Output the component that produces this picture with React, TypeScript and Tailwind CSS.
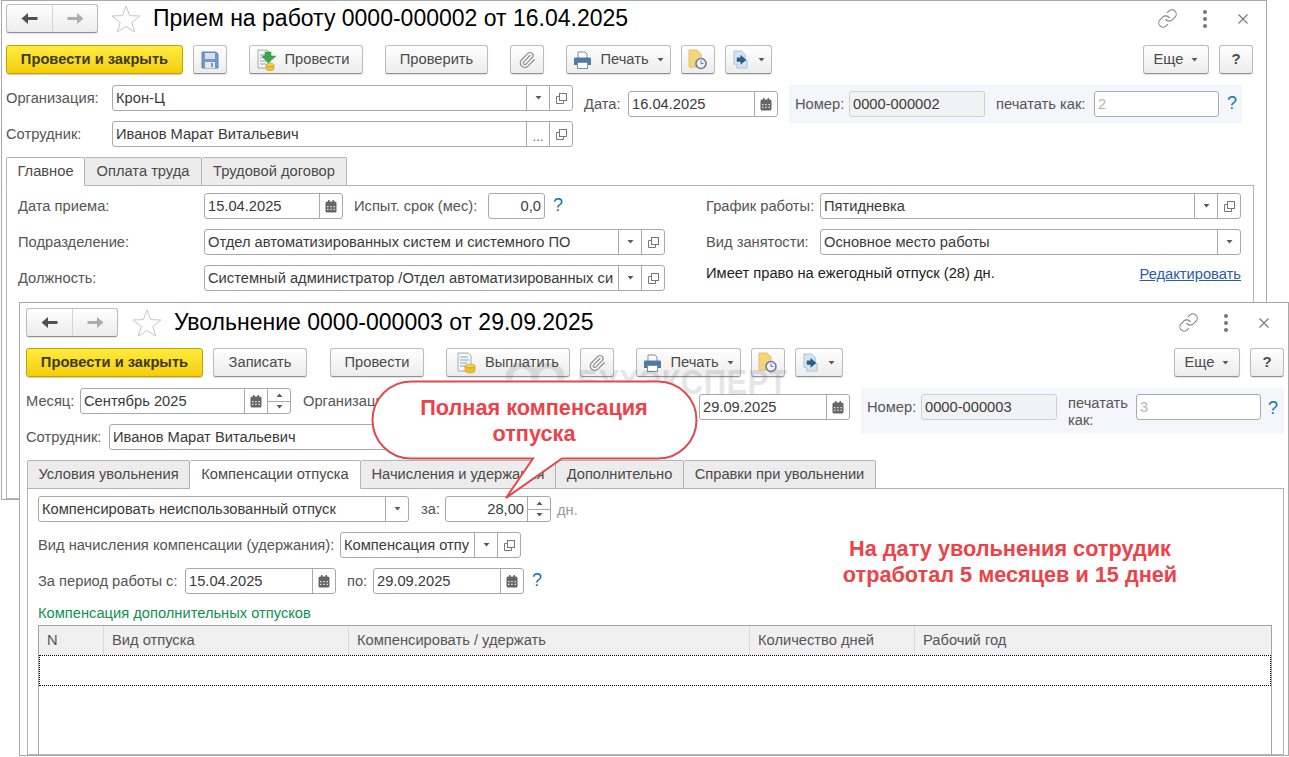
import type { ReactNode } from 'react';
import { Link, Paperclip } from 'lucide-react';

type Addon = 'drop' | 'open' | 'cal' | 'dots' | 'spin';

function Tri({ up = false }: { up?: boolean }) {
  return (
    <svg width="7" height="4" viewBox="0 0 7 4" className="shrink-0">
      <polygon points={up ? '0.5,4 6.5,4 3.5,0.5' : '0.5,0 6.5,0 3.5,3.5'} fill="#5a5a5a" />
    </svg>
  );
}

function OpenIcon() {
  return (
    <svg width="13" height="13" viewBox="0 0 13 13" fill="none" stroke="#777" strokeWidth="1">
      <rect x="4.5" y="1.5" width="7" height="7" />
      <path d="M4.5 4.5H1.5V11.5H8.5V8.5" />
    </svg>
  );
}

function CalIcon() {
  return (
    <svg width="12" height="13" viewBox="0 0 12 13">
      <rect x="0.5" y="1.5" width="11" height="11" rx="1.5" fill="#666" />
      <rect x="3" y="0" width="1.5" height="3" fill="#666" />
      <rect x="7.5" y="0" width="1.5" height="3" fill="#666" />
      <path d="M2 6h1.5v1.3H2zM5.2 6h1.5v1.3H5.2zM8.5 6H10v1.3H8.5zM2 8.8h1.5v1.3H2zM5.2 8.8h1.5v1.3H5.2zM8.5 8.8H10v1.3H8.5z" fill="#e4e4e4" />
    </svg>
  );
}

function Input({ w, text, addons = [], right, muted, faint }: { w: string; text?: string; addons?: Addon[]; right?: boolean; muted?: boolean; faint?: boolean }) {
  return (
    <div className={`${w} h-[26px] shrink-0 flex rounded-[3px] border overflow-hidden ${muted ? 'bg-[#f1f2f4] border-[#d0d0d0]' : 'bg-white border-[#a9a9a9]'}`}>
      <div className={`flex-1 min-w-0 px-[3px] leading-[24px] whitespace-nowrap overflow-hidden ${right ? 'text-right' : ''} ${faint ? 'text-[#b5b5b5]' : 'text-[#3a3a3a]'}`}>{text}</div>
      {addons.map((a) => (
        <div key={a} className="w-[23px] shrink-0 border-l border-[#a9a9a9] flex flex-col items-center justify-center">
          {a === 'drop' && <Tri />}
          {a === 'open' && <OpenIcon />}
          {a === 'cal' && <CalIcon />}
          {a === 'dots' && <span className="text-[#555] text-[13px] leading-none mt-[4px]">...</span>}
          {a === 'spin' && (
            <>
              <div className="flex-1 w-full flex items-center justify-center border-b border-[#a9a9a9]"><Tri up /></div>
              <div className="flex-1 w-full flex items-center justify-center"><Tri /></div>
            </>
          )}
        </div>
      ))}
    </div>
  );
}

function Btn({ w, ml, pad, children }: { w: string; ml?: string; pad?: string; children: ReactNode }) {
  return (
    <div className={`${w} ${ml ?? ''} ${pad ?? ''} h-[29px] shrink-0 flex items-center justify-center gap-[8px] rounded-[3px] border border-[#bcbcbc] border-b-[#919191] bg-linear-to-b from-white to-[#ececec] text-[#4a4a4a] shadow-[0_1px_1px_rgba(0,0,0,0.12)]`}>
      {children}
    </div>
  );
}

function YellowBtn({ w }: { w: string }) {
  return (
    <div className={`${w} h-[29px] shrink-0 flex items-center justify-center rounded-[3px] border border-[#c4a300] bg-linear-to-b from-[#ffec3d] to-[#f4cd00] font-bold text-[#3d3a1c] shadow-[0_1px_1px_rgba(0,0,0,0.2)]`}>
      Провести и закрыть
    </div>
  );
}

function SaveIcon() {
  return (
    <svg width="18" height="18" viewBox="0 0 18 18">
      <path d="M1 1H15L17 3V17H1Z" fill="#7499c6" stroke="#5f84b2" />
      <rect x="4" y="2" width="10" height="6" fill="#d3e0ee" />
      <rect x="4" y="11" width="10" height="6" fill="#e4e9f0" />
      <rect x="10" y="12" width="2" height="4" fill="#7b9cc2" />
    </svg>
  );
}

function PostIcon() {
  return (
    <svg width="20" height="22" viewBox="0 0 20 22">
      <path d="M1 1H10L13 4V19H1Z" fill="#f7f7f2" stroke="#a8a8a0" />
      <path d="M3 6h7M3 9h6M3 12h6M3 15h6" stroke="#8fa3ba" />
      <path d="M8 3H14V7H19L11 14L5 7H8Z" fill="#38a84a" stroke="#2a8a3b" strokeWidth="0.5" />
      <ellipse cx="13" cy="16" rx="4" ry="1.8" fill="#f5cf4a" stroke="#c79d1c" strokeWidth="0.6" />
      <path d="M9 16V20C9 21 11 21.5 13 21.5S17 21 17 20V16C17 17 15 17.8 13 17.8S9 17 9 16Z" fill="#efc136" stroke="#c79d1c" strokeWidth="0.6" />
    </svg>
  );
}

function PayIcon() {
  return (
    <svg width="20" height="22" viewBox="0 0 20 22">
      <path d="M1 1H11L14 4V19H1Z" fill="#f4f6f8" stroke="#a6acb3" />
      <path d="M3 5h8M3 8h9M3 11h7M3 14h5" stroke="#8fa3ba" />
      <ellipse cx="13" cy="14" rx="5" ry="2" fill="#f7d14c" stroke="#c79d1c" strokeWidth="0.6" />
      <path d="M8 14V19C8 20.2 10.5 21 13 21S18 20.2 18 19V14C18 15.2 15.5 16 13 16S8 15.2 8 14Z" fill="#efbe2e" stroke="#c79d1c" strokeWidth="0.6" />
    </svg>
  );
}

function PrintIcon() {
  return (
    <svg width="19" height="18" viewBox="0 0 19 18">
      <path d="M5 1H12L14 3V8H5Z" fill="#fff" stroke="#7d8fa3" />
      <path d="M1 8C1 6.9 1.9 6.5 3 6.5H16C17.1 6.5 18 6.9 18 8V14H1Z" fill="#4f7aa6" />
      <rect x="4.5" y="11.5" width="10" height="6" fill="#fff" stroke="#7d8fa3" />
    </svg>
  );
}

function ScheduleIcon() {
  return (
    <svg width="20" height="21" viewBox="0 0 20 21">
      <path d="M1 1H9L13 5V18H1Z" fill="#f4d67a" stroke="#e2c167" />
      <circle cx="13" cy="14.5" r="5" fill="#eef2f8" stroke="#6a7aa6" strokeWidth="1.6" />
      <path d="M13 11.5V14.5H15.5" stroke="#6a7aa6" fill="none" />
    </svg>
  );
}

function SendIcon() {
  return (
    <svg width="17" height="19" viewBox="0 0 18 20">
      <path d="M1 1H9L13 5V11H15V19H4V15H1Z" fill="#d6e4f2" stroke="#aebfd1" />
      <path d="M4 8H8V5L14 10.5L8 15.5V12.5H4Z" fill="#25608c" />
    </svg>
  );
}

function Clip() {
  return <Paperclip size={18} strokeWidth={1.6} className="text-[#8f8f8f]" />;
}

function Star() {
  return (
    <svg width="30" height="28" viewBox="0 0 30 28" className="shrink-0" fill="none" stroke="#c6c6c6" strokeWidth="1">
      <polygon points="15,1 18.6,10.6 29,11 20.8,17.4 23.7,27 15,21.5 6.3,27 9.2,17.4 1,11 11.4,10.6" />
    </svg>
  );
}

function Nav() {
  return (
    <div className="w-[92px] h-[29px] shrink-0 flex rounded-[3px] border border-[#bcbcbc] border-b-[#919191] bg-linear-to-b from-white to-[#ececec] shadow-[0_1px_1px_rgba(0,0,0,0.12)]">
      <div className="w-[46px] border-r border-[#d4d4d4] flex items-center justify-center">
        <svg width="17" height="13" viewBox="0 0 17 13"><polygon points="0.5,6.5 7,1 7,5 16.5,5 16.5,8 7,8 7,12" fill="#505050" /></svg>
      </div>
      <div className="flex-1 flex items-center justify-center">
        <svg width="17" height="13" viewBox="0 0 17 13"><polygon points="16.5,6.5 10,1 10,5 0.5,5 0.5,8 10,8 10,12" fill="#adadad" /></svg>
      </div>
    </div>
  );
}

function WinIcons() {
  return (
    <div className="ml-auto flex items-center text-[#858585]">
      <div className="w-[38px] flex justify-center"><Link size={21} strokeWidth={1.25} /></div>
      <div className="w-[38px] flex flex-col items-center gap-[3px]">
        <i className="w-[4px] h-[4px] rounded-full bg-[#777]" />
        <i className="w-[4px] h-[4px] rounded-full bg-[#777]" />
        <i className="w-[4px] h-[4px] rounded-full bg-[#777]" />
      </div>
      <div className="w-[38px] flex justify-center">
        <svg width="10" height="10" viewBox="0 0 10 10" stroke="#777" strokeWidth="1.1"><path d="M0.5 0.5L9.5 9.5M9.5 0.5L0.5 9.5" /></svg>
      </div>
    </div>
  );
}

function Tab({ w, active, children }: { w: string; active?: boolean; children: ReactNode }) {
  return (
    <div className={`${w} h-[29px] shrink-0 flex items-center justify-center whitespace-nowrap border border-[#b4b4b4] border-l-0 first:border-l rounded-t-[2px] text-[#4a4a4a] ${active ? 'bg-white border-b-white relative z-10' : 'bg-[#ececec]'}`}>
      {children}
    </div>
  );
}

function Q() {
  return <span className="text-[#1673b1] text-[18px] leading-none">?</span>;
}

function HireWindow() {
  return (
    <div className="absolute left-[1px] top-0 w-[1266px] h-[500px] bg-white border border-[#a8a8a8] flex flex-col pl-[4px] pt-[3px]">
      <div className="flex items-center h-[29px] pr-[4px]">
        <Nav />
        <div className="ml-[13px]"><Star /></div>
        <div className="ml-[12px] text-[23px] text-black whitespace-nowrap leading-none">Прием на работу 0000-000002 от 16.04.2025</div>
        <WinIcons />
      </div>

      <div className="flex mt-[12px] pr-[13px]">
        <YellowBtn w="w-[177px]" />
        <Btn w="w-[34px]" ml="ml-[10px]"><SaveIcon /></Btn>
        <Btn w="w-[114px]" ml="ml-[22px]" pad="pr-[6px]"><PostIcon />Провести</Btn>
        <Btn w="w-[103px]" ml="ml-[22px]">Проверить</Btn>
        <Btn w="w-[34px]" ml="ml-[22px]"><Clip /></Btn>
        <Btn w="w-[105px]" ml="ml-[22px]"><PrintIcon />Печать<Tri /></Btn>
        <Btn w="w-[34px]" ml="ml-[10px]"><ScheduleIcon /></Btn>
        <Btn w="w-[47px]" ml="ml-[10px]"><SendIcon /><Tri /></Btn>
        <Btn w="w-[66px]" ml="ml-auto">Еще<Tri /></Btn>
        <Btn w="w-[34px]" ml="ml-[10px]"><span className="font-bold text-[15px]">?</span></Btn>
      </div>

      <div className="flex items-start mt-[11px]">
        <div className="flex flex-col gap-[10px] w-[567px]">
          <div className="flex items-center">
            <span className="w-[106px] text-[#555]">Организация:</span>
            <Input w="w-[461px]" text="Крон-Ц" addons={['drop', 'open']} />
          </div>
          <div className="flex items-center">
            <span className="w-[106px] text-[#555]">Сотрудник:</span>
            <Input w="w-[461px]" text="Иванов Марат Витальевич" addons={['dots', 'open']} />
          </div>
        </div>
        <div className="flex items-center mt-[6px] ml-[11px]">
          <span className="w-[44px] text-[#555]">Дата:</span>
          <Input w="w-[150px]" text="16.04.2025" addons={['cal']} />
        </div>
        <div className="ml-[11px] w-[453px] h-[38px] bg-[#f4f6fb] flex items-center pl-[6px]">
          <span className="w-[54px] text-[#555]">Номер:</span>
          <Input w="w-[136px]" text="0000-000002" muted />
          <span className="ml-[11px] w-[98px] text-[#555] whitespace-nowrap">печатать как:</span>
          <Input w="w-[125px]" text="2" faint />
          <span className="ml-[8px]"><Q /></span>
        </div>
      </div>

      <div className="flex mt-[10px]">
        <Tab w="w-[79px]" active>Главное</Tab>
        <Tab w="w-[117px]">Оплата труда</Tab>
        <Tab w="w-[145px]">Трудовой договор</Tab>
      </div>
      <div className="w-[1248px] flex-1 -mt-px border border-[#b4b4b4] flex pl-[11px] pt-[7px]">
        <div className="w-[647px] flex flex-col gap-[10px]">
          <div className="flex items-center">
            <span className="w-[186px] text-[#555]">Дата приема:</span>
            <Input w="w-[139px]" text="15.04.2025" addons={['cal']} />
            <span className="w-[145px] pl-[11px] text-[#555] whitespace-nowrap">Испыт. срок (мес):</span>
            <Input w="w-[57px]" text="0,0" right />
            <span className="ml-[8px]"><Q /></span>
          </div>
          <div className="flex items-center">
            <span className="w-[186px] text-[#555]">Подразделение:</span>
            <Input w="w-[461px]" text="Отдел автоматизированных систем и системного ПО" addons={['drop', 'open']} />
          </div>
          <div className="flex items-center">
            <span className="w-[186px] text-[#555]">Должность:</span>
            <Input w="w-[461px]" text="Системный администратор /Отдел автоматизированных си" addons={['drop', 'open']} />
          </div>
        </div>
        <div className="ml-[41px] w-[535px] flex flex-col gap-[10px]">
          <div className="flex items-center">
            <span className="w-[114px] text-[#555]">График работы:</span>
            <Input w="w-[421px]" text="Пятидневка" addons={['drop', 'open']} />
          </div>
          <div className="flex items-center">
            <span className="w-[114px] text-[#555]">Вид занятости:</span>
            <Input w="w-[421px]" text="Основное место работы" addons={['drop']} />
          </div>
          <div className="flex items-center justify-between h-[16px]">
            <span className="text-[#222]">Имеет право на ежегодный отпуск (28) дн.</span>
            <span className="text-[#2a5ca8] underline mt-[2px]">Редактировать</span>
          </div>
        </div>
      </div>
    </div>
  );
}

function DismissWindow() {
  return (
    <div className="absolute left-[19px] top-[302px] w-[1270px] h-[454px] bg-white border border-[#a8a8a8] flex flex-col pl-[6px] pt-[5px] overflow-hidden">
      <div className="flex items-center h-[29px] pr-[5px]">
        <Nav />
        <div className="ml-[14px]"><Star /></div>
        <div className="ml-[12px] text-[23px] text-black whitespace-nowrap leading-none">Увольнение 0000-000003 от 29.09.2025</div>
        <WinIcons />
      </div>

      <div className="flex mt-[11px] pr-[4px]">
        <YellowBtn w="w-[177px]" />
        <Btn w="w-[94px]" ml="ml-[10px]">Записать</Btn>
        <Btn w="w-[94px]" ml="ml-[23px]">Провести</Btn>
        <Btn w="w-[124px]" ml="ml-[22px]"><PayIcon />Выплатить</Btn>
        <Btn w="w-[34px]" ml="ml-[10px]"><Clip /></Btn>
        <Btn w="w-[105px]" ml="ml-[22px]"><PrintIcon />Печать<Tri /></Btn>
        <Btn w="w-[34px]" ml="ml-[10px]"><ScheduleIcon /></Btn>
        <Btn w="w-[48px]" ml="ml-[10px]"><SendIcon /><Tri /></Btn>
        <Btn w="w-[66px]" ml="ml-auto">Еще<Tri /></Btn>
        <Btn w="w-[34px]" ml="ml-[10px]"><span className="font-bold text-[15px]">?</span></Btn>
      </div>

      <div className="flex items-start mt-[11px]">
        <div className="flex flex-col gap-[10px] w-[673px]">
          <div className="flex items-center">
            <span className="w-[54px] text-[#555]">Месяц:</span>
            <Input w="w-[211px]" text="Сентябрь 2025" addons={['cal', 'spin']} />
            <span className="ml-[12px] text-[#555]">Организация:</span>
          </div>
          <div className="flex items-center">
            <span className="w-[83px] text-[#555]">Сотрудник:</span>
            <Input w="w-[500px]" text="Иванов Марат Витальевич" addons={['dots', 'open']} />
          </div>
        </div>
        <div className="mt-[6px]"><Input w="w-[151px]" text="29.09.2025" addons={['cal']} /></div>
        <div className="ml-[11px] w-[423px] h-[46px] bg-[#f4f6fb] flex items-start pl-[6px] pt-[6px]">
          <span className="w-[54px] leading-[26px] text-[#555]">Номер:</span>
          <Input w="w-[136px]" text="0000-000003" muted />
          <span className="ml-[11px] w-[68px] mt-[1px] leading-[17px] text-[#555]">печатать как:</span>
          <Input w="w-[125px]" text="3" faint />
          <span className="ml-[7px] mt-[4px]"><Q /></span>
        </div>
      </div>

      <div className="flex mt-[10px] pl-[1px]">
        <Tab w="w-[163px]">Условия увольнения</Tab>
        <Tab w="w-[171px]" active>Компенсации отпуска</Tab>
        <Tab w="w-[195px]">Начисления и удержания</Tab>
        <Tab w="w-[128px]">Дополнительно</Tab>
        <Tab w="w-[192px]">Справки при увольнении</Tab>
      </div>
      <div className="ml-[1px] w-[1257px] flex-1 -mt-px border border-[#b4b4b4] flex flex-col pl-[10px] pt-[7px]">
        <div className="flex items-center">
          <Input w="w-[371px]" text="Компенсировать неиспользованный отпуск" addons={['drop']} />
          <span className="w-[36px] pl-[12px] text-[#555]">за:</span>
          <Input w="w-[106px]" text="28,00" addons={['spin']} right />
          <span className="ml-[6px] text-[#999] mt-[2px]">дн.</span>
        </div>
        <div className="flex items-center mt-[10px]">
          <span className="w-[302px] text-[#555] whitespace-nowrap">Вид начисления компенсации (удержания):</span>
          <Input w="w-[181px]" text="Компенсация отпу" addons={['drop', 'open']} />
        </div>
        <div className="flex items-center mt-[10px]">
          <span className="w-[147px] text-[#555] whitespace-nowrap">За период работы с:</span>
          <Input w="w-[151px]" text="15.04.2025" addons={['cal']} />
          <span className="w-[37px] pl-[11px] text-[#555]">по:</span>
          <Input w="w-[151px]" text="29.09.2025" addons={['cal']} />
          <span className="ml-[8px]"><Q /></span>
        </div>
        <div className="mt-[10px] h-[21px] leading-[18px] text-[#0f9150] whitespace-nowrap">Компенсация дополнительных отпусков</div>
        <div className="w-[1234px] flex-1 border border-b-0 border-[#a4a4a4]">
          <div className="grid grid-cols-[65px_245px_401px_165px_1fr] h-[29px] bg-[#f0f0f0] text-[#555] leading-[29px]">
            <div className="px-[8px] border-r border-[#d9d9d9]">N</div>
            <div className="px-[8px] border-r border-[#d9d9d9]">Вид отпуска</div>
            <div className="px-[8px] border-r border-[#d9d9d9]">Компенсировать / удержать</div>
            <div className="px-[8px] border-r border-[#d9d9d9]">Количество дней</div>
            <div className="px-[8px]">Рабочий год</div>
          </div>
          <div className="h-[31px] border border-dotted border-black" />
        </div>
      </div>
    </div>
  );
}

function Watermark() {
  return (
    <div className="absolute left-[503px] top-[363px] flex items-center gap-[10px] opacity-[0.14] pointer-events-none">
      <svg width="64" height="36" viewBox="0 0 64 36" fill="none" stroke="#55556a" strokeWidth="7">
        <circle cx="19" cy="15" r="13" />
        <circle cx="45" cy="15" r="13" />
        <path d="M32 20V36" />
      </svg>
      <span className="text-[31px] font-bold tracking-[0.5px] text-[#55556a] leading-none whitespace-nowrap scale-y-[1.15]">БУХЭКСПЕРТ</span>
    </div>
  );
}

function Bubble() {
  return (
    <div className="absolute left-[371px] top-[380px] w-[326px] h-[120px]">
      <svg width="328" height="120" viewBox="0 0 328 120" className="absolute inset-0">
        <path d="M40 1.5H287A38.5 38.5 0 0 1 287 78.5H191L135 118L162 78.5H40A38.5 38.5 0 0 1 40 1.5Z" fill="#fff" stroke="#e5474f" strokeWidth="2" />
      </svg>
      <div className="relative pt-[15px] text-center text-[21.7px] leading-[26px] font-bold text-[#ee4249]">
        Полная компенсация<br />отпуска
      </div>
    </div>
  );
}

export default function App() {
  return (
    <div className="relative w-[1289px] h-[757px] overflow-hidden bg-white font-['Liberation_Sans',Arial,sans-serif] text-[14.7px]">
      <HireWindow />
      <DismissWindow />
      <Watermark />
      <Bubble />
      <div className="absolute left-[810px] top-[536px] w-[400px] text-center text-[21.7px] leading-[26px] font-bold text-[#ee4249]">
        На дату увольнения сотрудик<br />отработал 5 месяцев и 15 дней
      </div>
    </div>
  );
}
